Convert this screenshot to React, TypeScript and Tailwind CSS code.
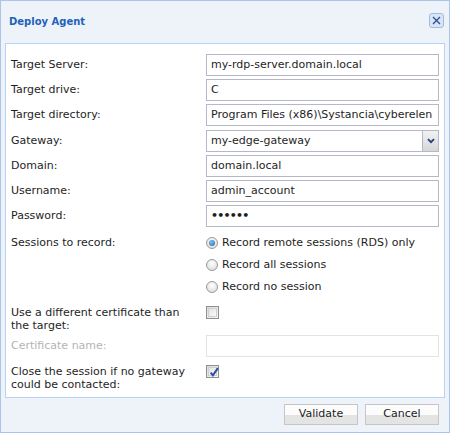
import React from "react";

const font = { fontFamily: '"DejaVu Sans", Verdana, sans-serif' };

function TextBox({ value, disabled }: { value?: string; disabled?: boolean }) {
  return (
    <div
      className={`h-[22px] w-[233px] flex items-center pl-[4px] overflow-hidden whitespace-nowrap bg-white text-[11px] text-[#1e1e1e] border ${
        disabled ? "border-[#e3e3e3]" : "border-[#b5b8c8]"
      }`}
    >
      {value}
    </div>
  );
}

function Row({ label, children, h = "h-[25px]" }: { label: string; children: React.ReactNode; h?: string }) {
  return (
    <div className={`flex ${h}`}>
      <div className="w-[195px] h-[22px] flex items-center text-[11px] text-[#1e1e1e]">{label}</div>
      {children}
    </div>
  );
}

function Radio({ checked, label }: { checked?: boolean; label: string }) {
  return (
    <div className="flex items-center h-[22px]">
      <div className="w-[12px] h-[12px] rounded-full border border-[#9a9a9a] bg-[radial-gradient(circle_at_50%_35%,#ffffff,#d6d6d6)] flex items-center justify-center">
        {checked && (
          <div className="w-[6px] h-[6px] rounded-full bg-[radial-gradient(circle_at_40%_35%,#7fc3f0,#1a63a8)]" />
        )}
      </div>
      <span className="ml-[4px] text-[11px] text-[#1e1e1e]">{label}</span>
    </div>
  );
}

function Checkbox({ checked }: { checked?: boolean }) {
  return (
    <div className="w-[13px] h-[13px] border border-[#8e8f8f] bg-[linear-gradient(135deg,#dcdcdc,#f8f8f8)] p-[1px]">
      <div className="w-full h-full border border-[#cfcfcf] bg-[linear-gradient(135deg,#e2e2e2,#fbfbfb)] relative">
        {checked && (
          <svg viewBox="0 0 9 9" className="absolute left-[0px] top-[-1px] w-[10px] h-[10px]">
            <path d="M1.5 5 L3.5 7.5 L8 1" fill="none" stroke="#2c4f9e" strokeWidth="1.8" />
          </svg>
        )}
      </div>
    </div>
  );
}

function Button({ label }: { label: string }) {
  return (
    <div className="w-[74px] h-[21px] border border-[#c6c6c6] bg-[linear-gradient(#fcfcfc_50%,#e4e4e4_50%)] flex items-center justify-center text-[11px] text-[#222]">
      {label}
    </div>
  );
}

export default function App() {
  return (
    <div style={font} className="w-[450px] h-[433px] bg-[#eef3fa] border border-[#a9c6ea] flex flex-col">
      <div className="h-[42px] flex items-start justify-between pl-[8px] pr-[5px]">
        <div className="mt-[14px] text-[10px] font-bold text-[#1f63b9] leading-[14px]">Deploy Agent</div>
        <div className="mt-[12px] w-[15px] h-[15px] rounded-[3px] border border-[#9fbce2] bg-[#d7e5f7] flex items-center justify-center">
          <svg viewBox="0 0 9 9" className="w-[9px] h-[9px]">
            <path d="M1 1 L8 8 M8 1 L1 8" stroke="#2d4f8c" strokeWidth="1.3" />
          </svg>
        </div>
      </div>
      <div className="mx-[4px] h-[355px] bg-white border border-[#b7d4f6] pt-[10px] pl-[5px] pr-[4px] flex flex-col">
        <Row label="Target Server:">
          <TextBox value="my-rdp-server.domain.local" />
        </Row>
        <Row label="Target drive:">
          <TextBox value="C" />
        </Row>
        <Row label="Target directory:" h="h-[26px]">
          <TextBox value="Program Files (x86)\Systancia\cyberelen" />
        </Row>
        <Row label="Gateway:">
          <div className="h-[22px] w-[233px] flex border border-[#b5b8c8] bg-white">
            <div className="flex-1 flex items-center pl-[4px] text-[11px] text-[#1e1e1e]">my-edge-gateway</div>
            <div className="w-[16px] border-l border-[#b5b8c8] bg-[linear-gradient(#f2f2f2,#d6d6d6)] flex items-center justify-center">
              <svg viewBox="0 0 8 6" className="w-[8px] h-[6px]">
                <path d="M1 1.2 L4 4.2 L7 1.2" fill="none" stroke="#1f3f7a" strokeWidth="1.8" />
              </svg>
            </div>
          </div>
        </Row>
        <Row label="Domain:">
          <TextBox value="domain.local" />
        </Row>
        <Row label="Username:">
          <TextBox value="admin_account" />
        </Row>
        <Row label="Password:" h="h-[27px]">
          <div className="h-[22px] w-[233px] flex items-center pl-[4px] bg-white border border-[#b5b8c8] text-[11px] tracking-[-0.8px] font-bold text-[#1e1e1e]">
            ••••••
          </div>
        </Row>
        <div className="flex h-[74px]">
          <div className="w-[195px] h-[22px] flex items-center text-[11px] text-[#1e1e1e]">Sessions to record:</div>
          <div className="flex flex-col">
            <Radio checked label="Record remote sessions (RDS) only" />
            <Radio label="Record all sessions" />
            <Radio label="Record no session" />
          </div>
        </div>
        <div className="flex h-[29px]">
          <div className="w-[195px] text-[11px] leading-[13px] text-[#1e1e1e] pr-[10px]">
            Use a different certificate than the target:
          </div>
          <Checkbox />
        </div>
        <div className="flex h-[30px]">
          <div className="w-[195px] h-[22px] flex items-center text-[11px] text-[#b4b4b4]">Certificate name:</div>
          <TextBox disabled />
        </div>
        <div className="flex">
          <div className="w-[195px] text-[11px] leading-[13px] text-[#1e1e1e] pr-[10px]">
            Close the session if no gateway could be contacted:
          </div>
          <Checkbox checked />
        </div>
      </div>
      <div className="flex justify-end gap-[7px] pr-[10px] mt-[6px]">
        <Button label="Validate" />
        <Button label="Cancel" />
      </div>
    </div>
  );
}
